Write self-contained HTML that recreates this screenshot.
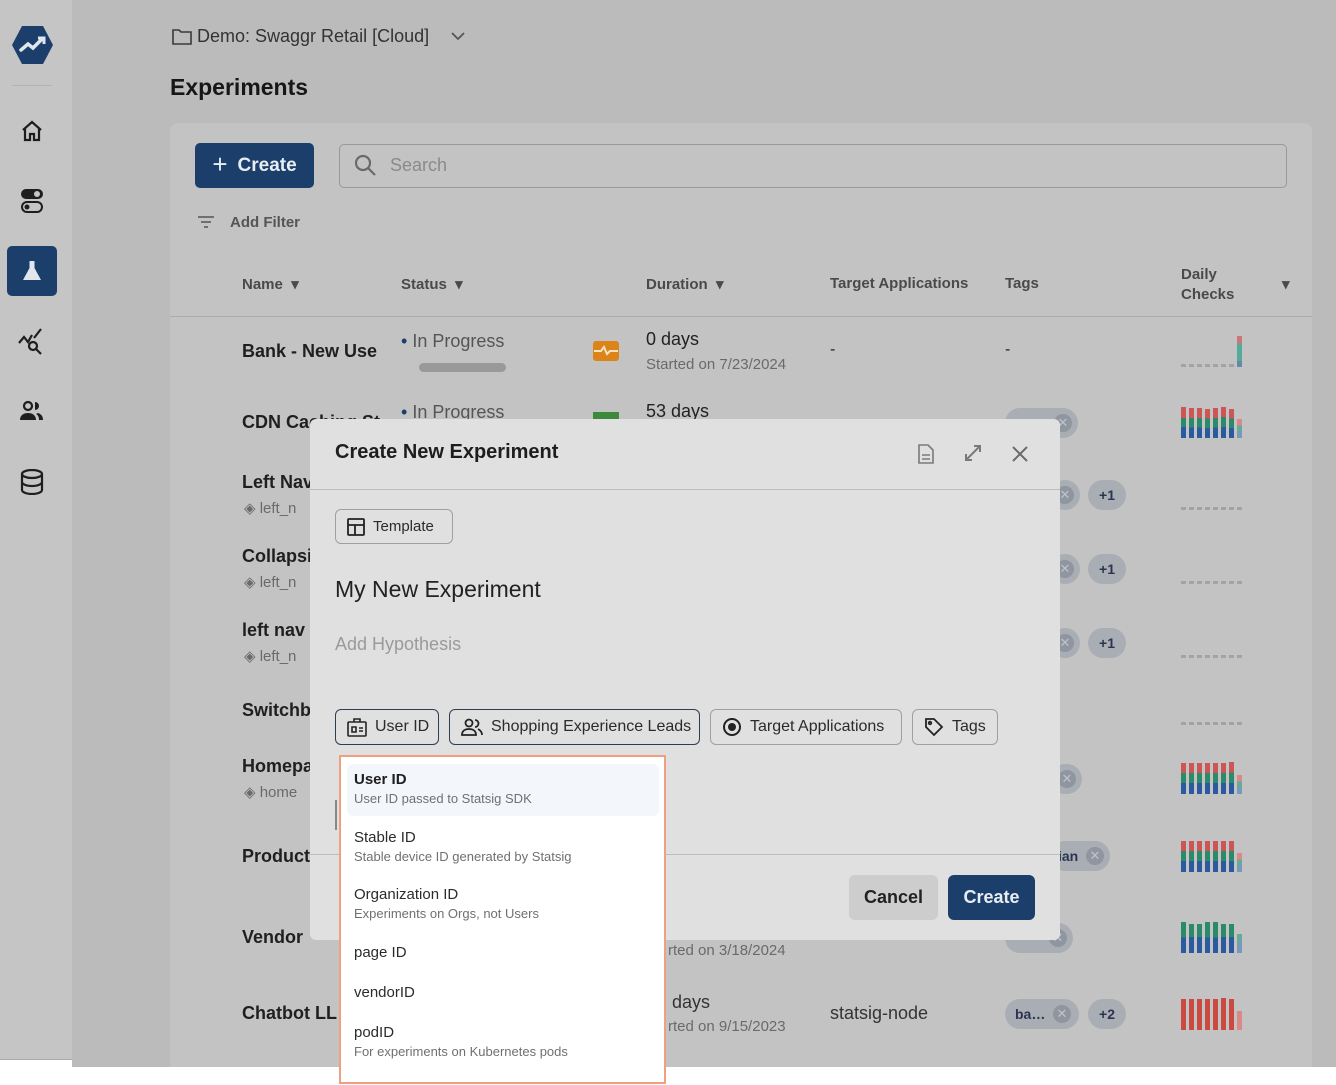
<!DOCTYPE html>
<html><head><meta charset="utf-8"><style>
*{box-sizing:border-box;margin:0;padding:0}
body{width:1336px;height:1085px;overflow:hidden;background:#fff;font-family:"Liberation Sans",sans-serif;position:relative;color:#1e1e1e}
.a{position:absolute}
.side{left:0;top:0;width:72px;height:1060px;background:#c5c5c5;border-bottom:1px solid #aaa}
.main{left:72px;top:0;width:1264px;height:1067px;background:#bbbbbc}
.panel{left:170px;top:123px;width:1142px;height:944px;background:#c3c3c3;border-radius:8px 8px 0 0}
.th{font-size:15px;font-weight:bold;color:#4a4a4a}
.nm{font-size:18px;font-weight:bold;color:#1f1f1f}
.sub{font-size:15px;color:#6a6a6a}
.pill{background:#a9aeb5;border-radius:16px;height:30px;font-size:14px;font-weight:bold;color:#2a3550;display:flex;align-items:center;justify-content:center}
.x{position:absolute;width:18px;height:18px;border-radius:50%;background:#8f96a0;color:#c0c4ca;font-size:13px;line-height:18px;text-align:center;font-weight:normal}
.bars{display:flex;align-items:flex-end;gap:3px;height:32px}
.bars i{display:block;width:5px}
.dots{display:flex;gap:3px}
.dots i{display:block;width:5px;height:3px;background:#a3a3a3}
.modal{left:310px;top:419px;width:750px;height:521px;background:#e0e0e0;border-radius:6px}
.btn{border:1px solid #8a8a8a;border-radius:6px;height:36px;display:flex;align-items:center;gap:8px;padding:0 11px;font-size:16px;color:#2b2b2b;background:#e0e0e0;white-space:nowrap}
.btn svg{flex:none}
.dd{left:339px;top:755px;width:327px;height:329px;background:#fff;border:2px solid #f0a080}
.it{position:absolute;left:13px;font-size:15px;color:#2b2b2b}
.it small{display:block;font-size:13px;color:#707070;margin-top:3px}
</style></head><body>
<div class="a side">
 <svg class="a" style="left:11px;top:24px" width="43" height="42" viewBox="0 0 43 42"><polygon points="11,2 32,2 42,21 32,40 11,40 1,21" fill="#1b3f6a"/><path d="M10 26l7-6 5 4 8-8" stroke="#dfe6ee" stroke-width="3.5" fill="none" stroke-linecap="round"/><path d="M27 14h6v6" stroke="#dfe6ee" stroke-width="3" fill="none"/></svg>
 <div class="a" style="left:12px;top:85px;width:40px;height:1px;background:#b3b3b3"></div>
 <svg class="a" style="left:20px;top:119px" width="24" height="24" viewBox="0 0 24 24" fill="none" stroke="#1e1e1e" stroke-width="2.2"><path d="M3 11L12 3l9 8M5 9v12h5v-6h4v6h5V9"/></svg>
 <svg class="a" style="left:20px;top:188px" width="24" height="26" viewBox="0 0 24 26"><rect x="1" y="1" width="22" height="10" rx="5" fill="#1e1e1e"/><circle cx="17" cy="6" r="3" fill="#c5c5c5"/><rect x="2" y="14" width="20" height="10" rx="5" fill="none" stroke="#1e1e1e" stroke-width="2"/><circle cx="7" cy="19" r="2.5" fill="#1e1e1e"/></svg>
 <div class="a" style="left:7px;top:246px;width:50px;height:50px;background:#1b3f6a;border-radius:5px"></div>
 <svg class="a" style="left:21px;top:260px" width="22" height="22" viewBox="0 0 22 22"><path d="M7 1h8M8.5 1v7L2 20h18L13.5 8V1" fill="#dfe6ee"/></svg>
 <svg class="a" style="left:18px;top:328px" width="30" height="28" viewBox="0 0 30 28" fill="none" stroke="#1e1e1e" stroke-width="2.2"><path d="M1 15l5-6 4 5 4-7M16 10l7-9"/><circle cx="15" cy="18" r="4"/><path d="M18 21l5 5"/></svg>
 <svg class="a" style="left:19px;top:400px" width="26" height="22" viewBox="0 0 26 22" fill="#1e1e1e"><circle cx="9" cy="6" r="4" fill="none" stroke="#1e1e1e" stroke-width="2.2"/><path d="M1 20c0-5 4-7 8-7s8 2 8 7z"/><path d="M16 2a4 4 0 010 8zM19 13c3 1 5 3 5 7h-4c0-3-1-5-3-6z"/></svg>
 <svg class="a" style="left:20px;top:469px" width="24" height="26" viewBox="0 0 24 26" fill="none" stroke="#1e1e1e" stroke-width="2.2"><ellipse cx="12" cy="5" rx="10" ry="4"/><path d="M2 5v16c0 2 4 4 10 4s10-2 10-4V5M2 13c0 2 4 4 10 4s10-2 10-4"/></svg>
</div>
<div class="a main"></div>
<svg class="a" style="left:172px;top:28px" width="20" height="18" viewBox="0 0 20 18" fill="none" stroke="#3a3a3a" stroke-width="1.6"><path d="M1 2h6l2 2h10v12H1z"/></svg>
<div class="a" style="left:197px;top:26px;font-size:18px;color:#333">Demo: Swaggr Retail [Cloud]</div>
<svg class="a" style="left:450px;top:31px" width="16" height="10" viewBox="0 0 16 10" fill="none" stroke="#555" stroke-width="1.8"><path d="M2 2l6 6 6-6"/></svg>
<div class="a" style="left:170px;top:74px;font-size:23px;font-weight:bold;color:#161616">Experiments</div>
<div class="a panel"></div>
<div class="a" style="left:195px;top:143px;width:119px;height:45px;background:#1b3f6a;border-radius:5px;color:#e8edf3;font-size:19px;font-weight:bold;display:flex;align-items:center;justify-content:center;gap:10px"><span style="font-size:26px;font-weight:normal;margin-top:-3px">+</span>Create</div>
<div class="a" style="left:339px;top:144px;width:948px;height:44px;border:1px solid #999;border-radius:5px"></div>
<svg class="a" style="left:353px;top:153px" width="24" height="24" viewBox="0 0 24 24" fill="none" stroke="#6a6a6a" stroke-width="2.2"><circle cx="10" cy="10" r="7"/><path d="M15 15l7 7"/></svg>
<div class="a" style="left:390px;top:155px;font-size:18px;color:#8a8a8a">Search</div>
<svg class="a" style="left:197px;top:215px" width="18" height="14" viewBox="0 0 18 14" stroke="#555" stroke-width="1.6"><path d="M1 2h16M4 7h10M7 12h4"/></svg>
<div class="a" style="left:230px;top:214px;font-size:15px;font-weight:bold;color:#555">Add Filter</div>
<div class="a th" style="left:242px;top:275px">Name &nbsp;▾</div>
<div class="a th" style="left:401px;top:275px">Status &nbsp;▾</div>
<div class="a th" style="left:646px;top:275px">Duration &nbsp;▾</div>
<div class="a th" style="left:830px;top:275px">Target Applications</div>
<div class="a th" style="left:1005px;top:275px">Tags</div>
<div class="a th" style="left:1181px;top:265px;line-height:20px">Daily<br>Checks</div>
<div class="a th" style="left:1282px;top:275px">▾</div>
<div class="a" style="left:170px;top:316px;width:1142px;height:1px;background:#aaa"></div>
<!-- rows -->
<div class="a nm" style="left:242px;top:341px">Bank - New Use</div>
<div class="a" style="left:401px;top:331px;font-size:18px;color:#555"><span style="color:#1b3f6a">•</span> In Progress</div>
<div class="a" style="left:419px;top:363px;width:87px;height:9px;background:#999;border-radius:5px"></div>
<div class="a" style="left:593px;top:341px;width:26px;height:20px;background:#dc8418;border-radius:3px"><svg width="26" height="20" viewBox="0 0 26 20" fill="none" stroke="#fbe3c5" stroke-width="2"><path d="M1 10h7l3-4 3 7 3-3h8"/></svg></div>
<div class="a" style="left:646px;top:329px;font-size:18px;color:#222">0 days</div>
<div class="a sub" style="left:646px;top:356px">Started on 7/23/2024</div>
<div class="a" style="left:830px;top:341px">-</div><div class="a" style="left:1005px;top:341px">-</div>
<div class="a" style="left:1181px;top:336px;display:flex;gap:3px;align-items:flex-end"><span class="dots"><i></i><i></i><i></i><i></i><i></i><i></i><i></i></span><span style="display:block;width:5px;height:31px;background:linear-gradient(#c77 0 25%,#5a9 25% 80%,#68a 80%)"></span></div>

<div class="a nm" style="left:242px;top:412px">CDN Caching St</div>
<div class="a" style="left:401px;top:402px;font-size:18px;color:#555"><span style="color:#1b3f6a">•</span> In Progress</div>
<div class="a" style="left:593px;top:412px;width:26px;height:10px;background:#3d8a3d"></div>
<div class="a" style="left:646px;top:401px;font-size:18px;color:#222">53 days</div>
<div class="a pill" style="left:1005px;top:408px;width:73px"><span class="x" style="right:6px;top:6px">✕</span></div>

<div class="a nm" style="left:242px;top:472px">Left Nav</div><div class="a sub" style="left:244px;top:499px">◈ left_n</div>
<div class="a nm" style="left:242px;top:546px">Collapsi</div><div class="a sub" style="left:244px;top:573px">◈ left_n</div>
<div class="a nm" style="left:242px;top:620px">left nav</div><div class="a sub" style="left:244px;top:647px">◈ left_n</div>
<div class="a nm" style="left:242px;top:700px">Switchb</div>
<div class="a nm" style="left:242px;top:756px">Homepa</div><div class="a sub" style="left:244px;top:783px">◈ home</div>
<div class="a nm" style="left:242px;top:846px">Product</div>
<div class="a nm" style="left:242px;top:927px">Vendor</div>
<div class="a nm" style="left:242px;top:1003px">Chatbot LL</div>
<div class="a pill" style="left:1050px;top:480px;width:30px"><span class="x" style="right:6px;top:6px">✕</span></div><div class="a pill" style="left:1088px;top:480px;width:38px">+1</div>
<div class="a pill" style="left:1050px;top:554px;width:30px"><span class="x" style="right:6px;top:6px">✕</span></div><div class="a pill" style="left:1088px;top:554px;width:38px">+1</div>
<div class="a pill" style="left:1050px;top:628px;width:30px"><span class="x" style="right:6px;top:6px">✕</span></div><div class="a pill" style="left:1088px;top:628px;width:38px">+1</div>
<div class="a pill" style="left:1050px;top:764px;width:32px"><span class="x" style="right:6px;top:6px">✕</span></div>
<div class="a pill" style="left:1050px;top:841px;width:60px;justify-content:flex-start;padding-left:8px">ian<span class="x" style="right:6px;top:6px">✕</span></div>
<div class="a pill" style="left:1005px;top:923px;width:68px"><span class="x" style="right:6px;top:6px">✕</span></div>
<div class="a sub" style="left:668px;top:942px">rted on 3/18/2024</div>
<div class="a" style="left:672px;top:992px;font-size:18px;color:#333">days</div>
<div class="a sub" style="left:668px;top:1018px">rted on 9/15/2023</div>
<div class="a" style="left:830px;top:1003px;font-size:18px;color:#333">statsig-node</div>
<div class="a pill" style="left:1005px;top:999px;width:74px;justify-content:flex-start;padding-left:10px">ba…<span class="x" style="right:8px;top:6px">✕</span></div><div class="a pill" style="left:1088px;top:999px;width:38px">+2</div>
<!-- dotted daily checks -->
<div class="a dots" style="left:1181px;top:507px"><i></i><i></i><i></i><i></i><i></i><i></i><i></i><i></i></div>
<div class="a dots" style="left:1181px;top:581px"><i></i><i></i><i></i><i></i><i></i><i></i><i></i><i></i></div>
<div class="a dots" style="left:1181px;top:655px"><i></i><i></i><i></i><i></i><i></i><i></i><i></i><i></i></div>
<div class="a dots" style="left:1181px;top:722px"><i></i><i></i><i></i><i></i><i></i><i></i><i></i><i></i></div>
<!-- bar charts -->
<div class="a bars" style="left:1181px;top:406px"><i style="height:31px;background:linear-gradient(#c55 0 35%,#2a8a6a 35% 65%,#2c5aa0 65%)"></i><i style="height:30px;background:linear-gradient(#c55 0 33%,#2a8a6a 33% 65%,#2c5aa0 65%)"></i><i style="height:30px;background:linear-gradient(#c55 0 33%,#2a8a6a 33% 65%,#2c5aa0 65%)"></i><i style="height:29px;background:linear-gradient(#c55 0 33%,#2a8a6a 33% 65%,#2c5aa0 65%)"></i><i style="height:30px;background:linear-gradient(#c55 0 33%,#2a8a6a 33% 65%,#2c5aa0 65%)"></i><i style="height:31px;background:linear-gradient(#c55 0 33%,#2a8a6a 33% 65%,#2c5aa0 65%)"></i><i style="height:29px;background:linear-gradient(#c55 0 33%,#2a8a6a 33% 65%,#2c5aa0 65%)"></i><i style="height:19px;background:linear-gradient(#d88 0 33%,#6a9 33% 65%,#79b 65%)"></i></div>
<div class="a bars" style="left:1181px;top:762px"><i style="height:31px;background:linear-gradient(#c55 0 33%,#2a8a6a 33% 65%,#2c5aa0 65%)"></i><i style="height:31px;background:linear-gradient(#c55 0 33%,#2a8a6a 33% 65%,#2c5aa0 65%)"></i><i style="height:31px;background:linear-gradient(#c55 0 33%,#2a8a6a 33% 65%,#2c5aa0 65%)"></i><i style="height:31px;background:linear-gradient(#c55 0 33%,#2a8a6a 33% 65%,#2c5aa0 65%)"></i><i style="height:31px;background:linear-gradient(#c55 0 33%,#2a8a6a 33% 65%,#2c5aa0 65%)"></i><i style="height:31px;background:linear-gradient(#c55 0 33%,#2a8a6a 33% 65%,#2c5aa0 65%)"></i><i style="height:32px;background:linear-gradient(#c55 0 33%,#2a8a6a 33% 65%,#2c5aa0 65%)"></i><i style="height:19px;background:linear-gradient(#d88 0 33%,#6a9 33% 65%,#79b 65%)"></i></div>
<div class="a bars" style="left:1181px;top:840px"><i style="height:31px;background:linear-gradient(#c55 0 33%,#2a8a6a 33% 65%,#2c5aa0 65%)"></i><i style="height:31px;background:linear-gradient(#c55 0 33%,#2a8a6a 33% 65%,#2c5aa0 65%)"></i><i style="height:31px;background:linear-gradient(#c55 0 33%,#2a8a6a 33% 65%,#2c5aa0 65%)"></i><i style="height:31px;background:linear-gradient(#c55 0 33%,#2a8a6a 33% 65%,#2c5aa0 65%)"></i><i style="height:31px;background:linear-gradient(#c55 0 33%,#2a8a6a 33% 65%,#2c5aa0 65%)"></i><i style="height:31px;background:linear-gradient(#c55 0 33%,#2a8a6a 33% 65%,#2c5aa0 65%)"></i><i style="height:31px;background:linear-gradient(#c55 0 33%,#2a8a6a 33% 65%,#2c5aa0 65%)"></i><i style="height:19px;background:linear-gradient(#d88 0 33%,#6a9 33% 65%,#79b 65%)"></i></div>
<div class="a bars" style="left:1181px;top:921px"><i style="height:31px;background:linear-gradient(#2a8a6a 0 50%,#2c5aa0 50%)"></i><i style="height:29px;background:linear-gradient(#2a8a6a 0 45%,#2c5aa0 45%)"></i><i style="height:29px;background:linear-gradient(#2a8a6a 0 45%,#2c5aa0 45%)"></i><i style="height:31px;background:linear-gradient(#2a8a6a 0 50%,#2c5aa0 50%)"></i><i style="height:31px;background:linear-gradient(#2a8a6a 0 50%,#2c5aa0 50%)"></i><i style="height:29px;background:linear-gradient(#2a8a6a 0 45%,#2c5aa0 45%)"></i><i style="height:29px;background:linear-gradient(#2a8a6a 0 45%,#2c5aa0 45%)"></i><i style="height:19px;background:linear-gradient(#6a9 0 40%,#79b 40%)"></i></div>
<div class="a bars" style="left:1181px;top:998px"><i style="height:31px;background:#c94a40"></i><i style="height:31px;background:#c94a40"></i><i style="height:31px;background:#c94a40"></i><i style="height:31px;background:#c94a40"></i><i style="height:31px;background:#c94a40"></i><i style="height:32px;background:#c94a40"></i><i style="height:31px;background:#c94a40"></i><i style="height:19px;background:#d98a85"></i></div>

<!-- modal -->
<div class="a modal"></div>
<div class="a" style="left:335px;top:441px;font-size:20px;font-weight:bold;color:#1e1e1e">Create New Experiment</div>
<svg class="a" style="left:917px;top:444px" width="18" height="20" viewBox="0 0 18 20" fill="none" stroke="#7a7a7a" stroke-width="1.6"><path d="M2 1h9l5 5v13H2zM5 11h8M5 15h8"/></svg>
<svg class="a" style="left:963px;top:443px" width="20" height="20" viewBox="0 0 20 20" fill="none" stroke="#7a7a7a" stroke-width="2"><path d="M3 17L17 3M11 3h6v6M3 11v6h6"/></svg>
<svg class="a" style="left:1011px;top:445px" width="18" height="18" viewBox="0 0 18 18" stroke="#6a6a6a" stroke-width="2"><path d="M2 2l14 14M16 2L2 16"/></svg>
<div class="a" style="left:310px;top:489px;width:750px;height:1px;background:#bcbcbc"></div>
<div class="a btn" style="left:335px;top:509px;height:35px;width:118px;border-color:#a0a0a0;font-size:15px"><svg width="18" height="18" viewBox="0 0 18 18" fill="none" stroke="#222" stroke-width="1.8"><rect x="1" y="1" width="16" height="16" rx="1"/><path d="M1 7h16M8 7v10"/></svg>Template</div>
<div class="a" style="left:335px;top:576px;font-size:23px;color:#222">My New Experiment</div>
<div class="a" style="left:335px;top:634px;font-size:18px;color:#9a9a9a">Add Hypothesis</div>
<div class="a btn" style="left:335px;top:709px;width:104px;border-color:#2e3e55"><svg width="20" height="20" viewBox="0 0 20 20" fill="none" stroke="#222" stroke-width="1.6"><rect x="1" y="5" width="18" height="14" rx="1"/><path d="M7 5V2h6v3M5 10h4v5H5zM12 11h4M12 14h4"/></svg>User ID</div>
<div class="a btn" style="left:449px;top:709px;width:251px;border-color:#2e3e55"><svg width="22" height="18" viewBox="0 0 22 18" fill="none" stroke="#222" stroke-width="1.8"><circle cx="8" cy="5" r="3.5"/><path d="M1 17c0-4 3-6 7-6s7 2 7 6zM14 2a3.5 3.5 0 010 7M17 11c2 1 4 3 4 6"/></svg>Shopping Experience Leads</div>
<div class="a btn" style="left:710px;top:709px;width:192px;border-color:#a0a0a0"><svg width="20" height="20" viewBox="0 0 20 20"><circle cx="10" cy="10" r="8" fill="none" stroke="#222" stroke-width="2"/><circle cx="10" cy="10" r="4" fill="#222"/></svg>Target Applications</div>
<div class="a btn" style="left:912px;top:709px;width:86px;border-color:#a0a0a0"><svg width="20" height="20" viewBox="0 0 20 20" fill="none" stroke="#222" stroke-width="1.8"><path d="M2 2h8l8 8-8 8-8-8z"/><circle cx="6" cy="6" r="1.3"/></svg>Tags</div>
<div class="a" style="left:310px;top:854px;width:750px;height:1px;background:#bcbcbc"></div>
<div class="a" style="left:849px;top:875px;width:89px;height:45px;background:#cdcdcd;border-radius:6px;font-size:18px;font-weight:bold;color:#222;display:flex;align-items:center;justify-content:center">Cancel</div>
<div class="a" style="left:948px;top:875px;width:87px;height:45px;background:#1b3f6a;border-radius:6px;font-size:18px;font-weight:bold;color:#e8edf3;display:flex;align-items:center;justify-content:center">Create</div>
<div class="a" style="left:335px;top:800px;width:2px;height:30px;background:#888"></div>
<!-- dropdown -->
<div class="a dd">
 <div class="a" style="left:6px;top:7px;width:312px;height:52px;background:#f3f6fb;border-radius:6px"></div>
 <div class="it" style="top:14px;font-weight:bold;color:#1e1e1e">User ID<small style="font-weight:normal">User ID passed to Statsig SDK</small></div>
 <div class="it" style="top:72px">Stable ID<small>Stable device ID generated by Statsig</small></div>
 <div class="it" style="top:129px">Organization ID<small>Experiments on Orgs, not Users</small></div>
 <div class="it" style="top:187px">page ID</div>
 <div class="it" style="top:227px">vendorID</div>
 <div class="it" style="top:267px">podID<small>For experiments on Kubernetes pods</small></div>
</div>
</body></html>
